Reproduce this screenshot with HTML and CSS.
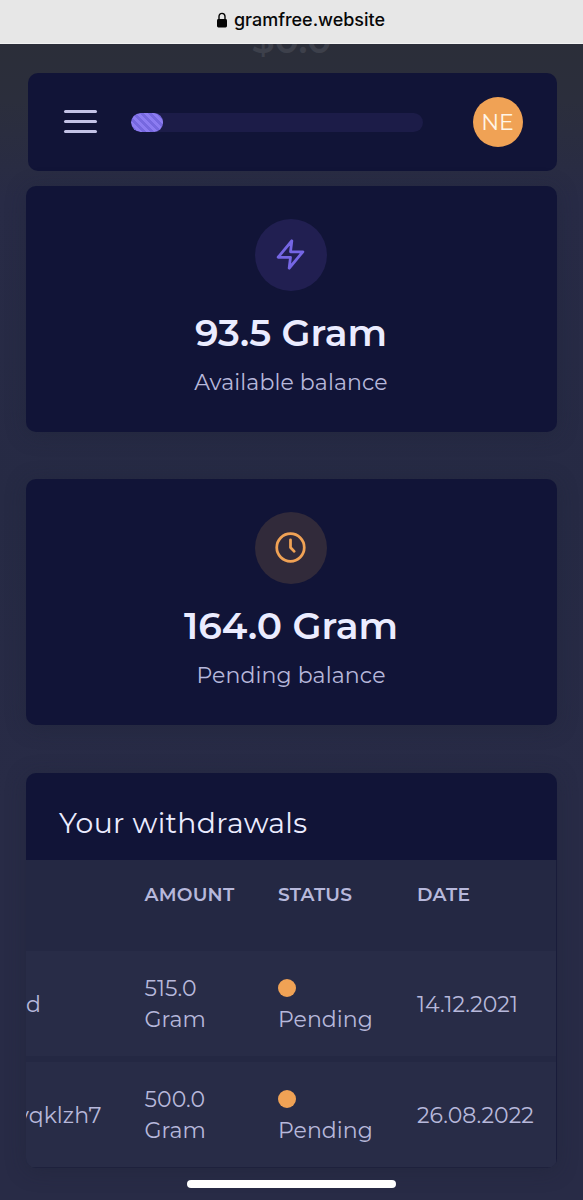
FILE: index.html
```html
<!DOCTYPE html>
<html lang="en">
<head>
<meta charset="utf-8">
<title>gramfree.website</title>
<link rel="stylesheet" href="styles.css">
</head>
<body>
<div class="screen">
  <header class="address">
    <svg class="lock" viewBox="0 0 12 16" width="12" height="16"><path d="M3 8V4.6C3 2.5 4.2 1.4 6 1.4s3 1.1 3 3.2V8" fill="none" stroke="#050505" stroke-width="1.4"/><rect x="1" y="7" width="10" height="8.4" rx="1.4" fill="#050505"/></svg>
    <span class="domain">gramfree.website</span>
  </header>
  <div class="scrolled"><span class="ghost">$0.0</span></div>
  <nav class="navbar">
    <div class="menu"><i></i><i></i><i></i></div>
    <div class="progress"><div class="progress-fill"></div></div>
    <div class="avatar"><span>NE</span></div>
  </nav>
  <main class="content">
    <section class="card">
      <div class="badge badge-violet">
        <svg viewBox="0 0 24 24" width="33" height="33"><path d="M13 2 3 14h9l-1 8 10-12h-9z"/></svg>
      </div>
      <h2 class="value">93.5 Gram</h2>
      <p class="caption">Available balance</p>
    </section>
    <section class="card">
      <div class="badge badge-orange">
        <svg viewBox="0 0 24 24" width="33" height="33"><circle cx="12" cy="12" r="10"/><path d="M12 6.4V12l2.7 2.8"/></svg>
      </div>
      <h2 class="value">164.0 Gram</h2>
      <p class="caption">Pending balance</p>
    </section>
    <section class="withdrawals">
      <h3 class="title">Your withdrawals</h3>
      <div class="table">
        <div class="row head"><span></span><span>AMOUNT</span><span>STATUS</span><span>DATE</span></div>
        <div class="row">
          <span>d</span>
          <span>515.0<br>Gram</span>
          <span class="status"><i class="dot"></i><span>Pending</span></span>
          <span>14.12.2021</span>
        </div>
        <div class="row">
          <span class="wallet-long">vqklzh7</span>
          <span>500.0<br>Gram</span>
          <span class="status"><i class="dot"></i><span>Pending</span></span>
          <span>26.08.2022</span>
        </div>
      </div>
    </section>
  </main>
  <div class="home"></div>
</div>
</body>
</html>
```
FILE: styles.css
```css
* { box-sizing: border-box; }
body { margin: 0; background: #282b46; font-family: Montserrat, Inter, "Open Sans", sans-serif; color: #b7b8db; }
h2, h3, p { margin: 0; font-weight: 400; }
.screen { width: 583px; height: 1200px; overflow: hidden; display: flex; flex-direction: column; background: linear-gradient(#2b2e39 44px, #2b2e3c 100px, #282b46 200px, #262a44 500px, #282b46 800px, #282b46); }
.address { height: 44px; flex: none; display: flex; justify-content: center; align-items: center; gap: 6px; padding: 0 0 4px 18px; background: #e7e7e7; border-bottom: 1px solid #f1f1f1; }
.domain { font: 500 18px/24px Inter, sans-serif; letter-spacing: -0.02px; color: #080808; }
.scrolled { height: 29px; flex: none; overflow: hidden; display: flex; justify-content: center; }
.ghost { font-size: 36.5px; font-weight: 600; line-height: 44px; margin-top: -26px; color: #3d404b; }
.navbar { margin: 0 26px 0 28px; height: 98px; flex: none; border-radius: 10px; background: #111437; display: flex; align-items: center; padding: 0 34.5px 0 36px; }
.menu { width: 33px; height: 23px; margin-top: -1px; display: flex; flex-direction: column; justify-content: space-between; }
.menu i { height: 3px; border-radius: 2px; background: #c3c3e6; }
.progress { margin-left: 34px; width: 292px; height: 19px; border-radius: 10px; background: #1c1c48; overflow: hidden; }
.progress-fill { width: 32px; height: 19px; border-radius: 9px; background: repeating-linear-gradient(45deg, #8c7cf1 0 2.8px, #7668df 2.8px 5.6px); }
.avatar { margin-left: auto; width: 50px; height: 50px; border-radius: 50%; background: #f0a255; display: flex; align-items: center; justify-content: center; color: #fff5e8; font-size: 22px; font-weight: 400; }
.content { padding: 15px 26px 0; display: flex; flex-direction: column; }
.card { height: 246px; margin-bottom: 47px; border-radius: 10px; background: #111437; box-shadow: 0 3px 20px rgba(30, 33, 52, .35); display: flex; flex-direction: column; align-items: center; padding: 33px 1px 0 0; }
.card + .card { margin-bottom: 48px; }
.badge { width: 72px; height: 72px; border-radius: 50%; display: flex; align-items: center; justify-content: center; }
.badge svg { margin: 0 1px 1px 0; fill: none; stroke-width: 2; stroke-linecap: round; stroke-linejoin: round; }
.badge-violet { background: #211f51; }
.badge-violet svg { stroke: #7566e4; }
.badge-orange { background: #312a3a; }
.badge-orange svg { stroke: #f0a255; }
.value { font-size: 37.6px; font-weight: 600; line-height: 46px; margin-top: 19px; color: #ebecff; white-space: nowrap; }
.caption { font-size: 22px; letter-spacing: 0.12px; line-height: 30px; margin-top: 12px; white-space: nowrap; }
.withdrawals { height: 395px; border-radius: 10px; overflow: hidden; background: #242843; box-shadow: 0 3px 20px rgba(30, 33, 52, .35); }
.title { height: 87px; background: #111437; padding: 32px 33px 0; font-size: 28.3px; letter-spacing: 0.35px; line-height: 36px; color: #ebecff; white-space: nowrap; }
.table { display: flex; flex-direction: column; gap: 6px; border-right: 1px solid #191c3a; border-bottom: 1px solid #1e213d; }
.row { height: 105px; padding-top: 1px; display: grid; grid-template-columns: 118.5px 133.5px 139px 1fr; align-items: center; background: #282c47; font-size: 22px; letter-spacing: 0.06px; line-height: 31px; white-space: nowrap; }
.head { height: 91px; margin-bottom: -6px; background: #242843; align-items: start; padding-top: 19px; font-size: 18.7px; font-weight: 600; letter-spacing: 0.2px; }
.wallet-long { margin-left: -9px; }
.status { display: flex; flex-direction: column; }
.dot { width: 18px; height: 18px; margin: 6px 0 7px; border-radius: 50%; background: #f0a255; }
.home { width: 209px; height: 8px; flex: none; margin: 12px 0 0 187px; border-radius: 4px; background: #fff; }
```
